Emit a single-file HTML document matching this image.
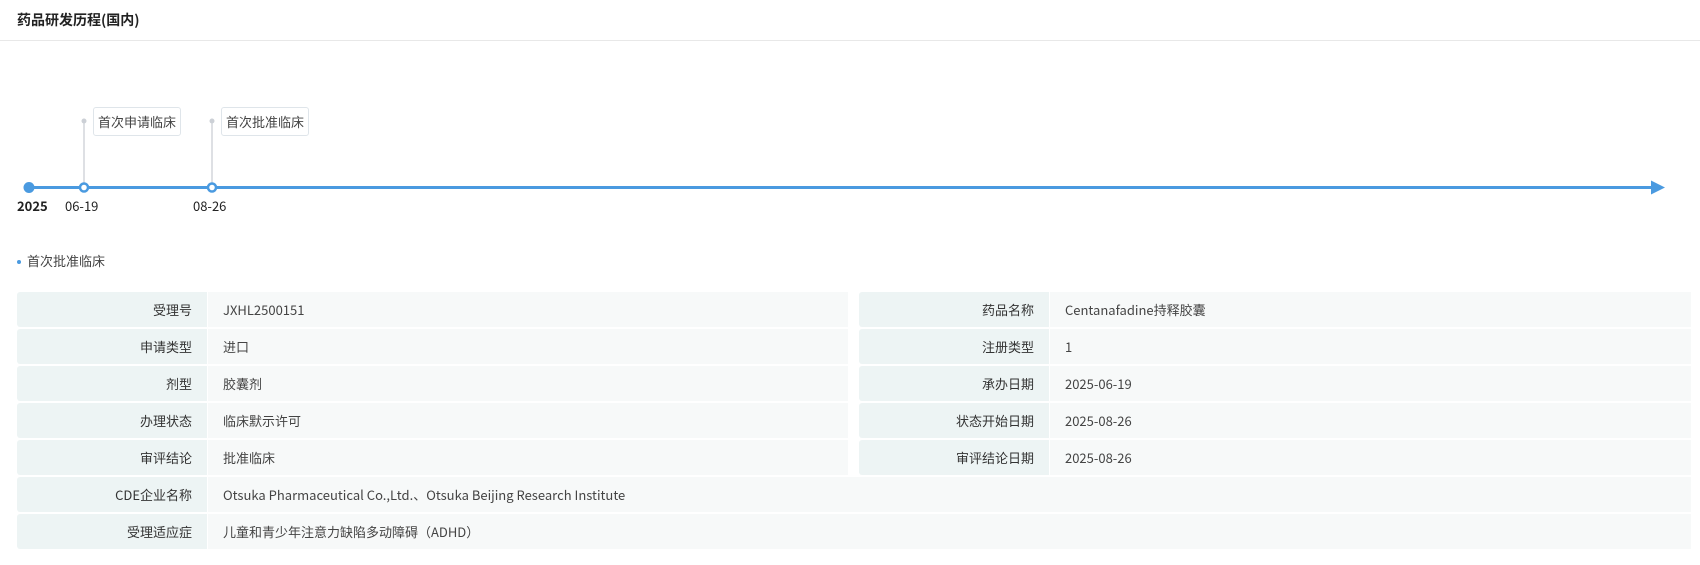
<!DOCTYPE html>
<html><head><meta charset="utf-8"><style>
body{margin:0;width:1700px;height:565px;background:#fff;font-family:"Noto Sans CJK SC","Liberation Sans",sans-serif;color:#333;overflow:hidden;position:relative}
.t{position:absolute;left:17px;top:9px;font-size:14px;font-weight:bold;color:#222;line-height:22px}
.hb{position:absolute;left:0;top:40px;width:1700px;height:1px;background:#e8e8e8}
.box{position:absolute;top:107px;height:27px;border:1px solid #dfe5ea;border-radius:3px;font-size:13px;line-height:27px;padding:0 4px;color:#444;background:#fff}
.d{position:absolute;top:197px;font-size:13px;line-height:18px;color:#222}
.row{position:absolute;height:35px;display:flex;font-size:13px;line-height:35px}
.l{background:#edf4f4;text-align:right;padding-right:15px;box-sizing:border-box;width:190px;color:#333;border-radius:3px 0 0 3px}
.v{background:#f7f9f9;flex:1;padding-left:15px;color:#444;margin-left:1px}
</style></head><body>
<div class="t">药品研发历程(国内)</div>
<div class="hb"></div>
<svg style="position:absolute;left:0;top:0" width="1700" height="230">
<line x1="84" y1="121" x2="84" y2="187" stroke="#ccd0d6" stroke-width="1.3"/>
<line x1="212" y1="121" x2="212" y2="187" stroke="#ccd0d6" stroke-width="1.3"/>
<circle cx="84" cy="121" r="2.5" fill="#ccd0d6"/>
<circle cx="212" cy="121" r="2.5" fill="#ccd0d6"/>
<line x1="29" y1="187.5" x2="1654" y2="187.5" stroke="#4a9ae0" stroke-width="3"/>
<polygon points="1651,180.5 1665,187.5 1651,194.5" fill="#4a9ae0"/>
<circle cx="29" cy="187.5" r="5.5" fill="#4a9ae0"/>
<circle cx="84" cy="187.5" r="4" fill="#fff" stroke="#4a9ae0" stroke-width="2.5"/>
<circle cx="212" cy="187.5" r="4" fill="#fff" stroke="#4a9ae0" stroke-width="2.5"/>
</svg>
<div class="box" style="left:93px">首次申请临床</div>
<div class="box" style="left:221px">首次批准临床</div>
<div class="d" style="left:17px;font-weight:bold">2025</div>
<div class="d" style="left:65px">06-19</div>
<div class="d" style="left:193px">08-26</div>
<div style="position:absolute;left:17px;top:260px;width:4px;height:4px;border-radius:2px;background:#4a9ae0"></div>
<div style="position:absolute;left:27px;top:252px;font-size:13px;line-height:18px;color:#444">首次批准临床</div>

<div class="row" style="left:17px;top:292px;width:831px"><div class="l">受理号</div><div class="v">JXHL2500151</div></div>
<div class="row" style="left:859px;top:292px;width:832px"><div class="l">药品名称</div><div class="v">Centanafadine持释胶囊</div></div>
<div class="row" style="left:17px;top:329px;width:831px"><div class="l">申请类型</div><div class="v">进口</div></div>
<div class="row" style="left:859px;top:329px;width:832px"><div class="l">注册类型</div><div class="v">1</div></div>
<div class="row" style="left:17px;top:366px;width:831px"><div class="l">剂型</div><div class="v">胶囊剂</div></div>
<div class="row" style="left:859px;top:366px;width:832px"><div class="l">承办日期</div><div class="v">2025-06-19</div></div>
<div class="row" style="left:17px;top:403px;width:831px"><div class="l">办理状态</div><div class="v">临床默示许可</div></div>
<div class="row" style="left:859px;top:403px;width:832px"><div class="l">状态开始日期</div><div class="v">2025-08-26</div></div>
<div class="row" style="left:17px;top:440px;width:831px"><div class="l">审评结论</div><div class="v">批准临床</div></div>
<div class="row" style="left:859px;top:440px;width:832px"><div class="l">审评结论日期</div><div class="v">2025-08-26</div></div>
<div class="row" style="left:17px;top:477px;width:1674px"><div class="l">CDE企业名称</div><div class="v">Otsuka Pharmaceutical Co.,Ltd.、Otsuka Beijing Research Institute</div></div>
<div class="row" style="left:17px;top:514px;width:1674px"><div class="l">受理适应症</div><div class="v">儿童和青少年注意力缺陷多动障碍（ADHD）</div></div>
</body></html>
